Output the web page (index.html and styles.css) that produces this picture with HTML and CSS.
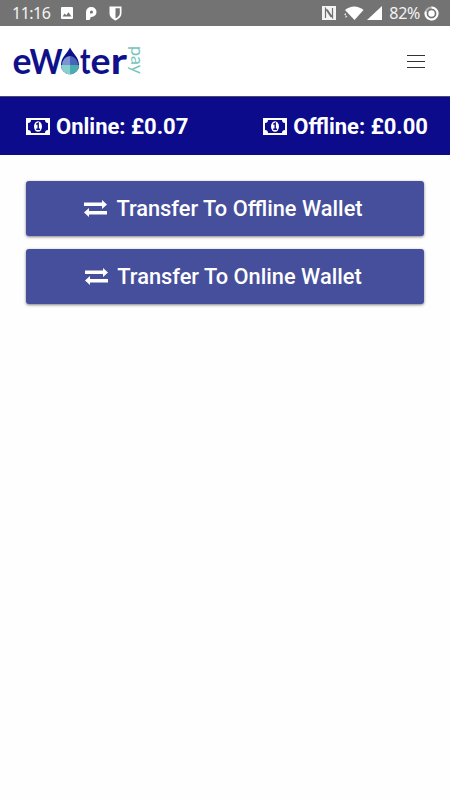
FILE: index.html
```
<!DOCTYPE html>
<html lang="en">
<head>
    <meta charset="UTF-8">
    <meta name="viewport" content="width=device-width, initial-scale=1.0">
    <title>eWater pay</title>
    <link rel="stylesheet" href="styles.css">
</head>
<body>
    <div class="status-bar">
        <div class="status-left">
            <span class="clock">11:16</span>
            <svg class="image-icon" width="12" height="12" viewBox="0 0 12 12">
                <path fill="#fff" fill-rule="evenodd" d="M1 0h10a1 1 0 0 1 1 1v10a1 1 0 0 1-1 1H1a1 1 0 0 1-1-1V1a1 1 0 0 1 1-1zM1.5 9.5h9L7.5 5.3 5.2 8.2 3.7 6.5z"/>
            </svg>
            <svg class="p-icon" width="11" height="13" viewBox="0 0 11 13">
                <path fill="#fff" fill-rule="evenodd" d="M0 5a5 5 0 0 1 5-5h.5a5 5 0 0 1 0 10H4.500v1a2 2 0 0 1-2 2H0zM4 6.500h1.500A1.500 1.500 0 1 0 4 5z"/>
            </svg>
            <svg class="shield-icon" width="13" height="15" viewBox="0 0 13 15">
                <path fill="#fff" fill-rule="evenodd" d="M0.5 0.5h12v6.7c0 3.5-3 5.8-6 7.3-3-1.5-6-3.8-6-7.3zM6.5 2.3v10.2c2.4-1.3 4.3-2.9 4.3-5.3V2.3z"/>
            </svg>
        </div>
        <div class="status-right">
            <svg width="14" height="14" viewBox="0 0 14 14">
                <path fill="#f4f4f4" d="M0 0h14v14H0z"/>
                <path fill="none" stroke="#707070" stroke-width="1.2" d="M3.5 12V2.5L9 11M10.5 2v9.5L5.2 3.5"/>
            </svg>
            <svg class="wifi-icon" width="20" height="14" viewBox="0 0 20 14">
                <path fill="#fff" d="M1 4C6.5-.8 14-.8 19.5 4L10.5 14z"/>
                <path fill="#ddd" d="M0 8.5l2-1.500v3zM3.500 10.500l-2-1.500v3z"/>
            </svg>
            <svg class="signal-icon" width="15" height="14" viewBox="0 0 15 14">
                <path fill="#fff" d="M15 0v14H0z"/>
            </svg>
            <span class="battery">82%</span>
            <svg class="battery-icon" width="15" height="15" viewBox="0 0 15 15">
                <circle cx="7.5" cy="7.5" r="6" fill="none" stroke="#b5b5b5" stroke-width="2"/>
                <path fill="none" stroke="#fff" stroke-width="2" d="M7.5 1.5a6 6 0 1 1-5.6 4"/>
                <circle cx="7.5" cy="7.5" r="3.2" fill="#fff"/>
            </svg>
        </div>
    </div>

    <header class="header">
        <svg class="logo" width="136" height="54" viewBox="0 0 136 54">
            <text class="logo-text" x="0.5" y="40" font-size="36" textLength="19" lengthAdjust="spacingAndGlyphs">e</text>
            <text class="logo-text" x="17.5" y="40" font-size="34" textLength="33" lengthAdjust="spacingAndGlyphs">W</text>
            <path fill="#10108a" d="M58 13.500c2 5 9 9.500 9 17.500a9 9.300 0 0 1-18 0C49 23 56 18.500 58 13.500z"/>
            <path fill="#7c93d4" d="M58 22v9h-8a8 9 0 0 1 8-9z"/>
            <path fill="#4667b8" d="M58 22v9h8a8 9 0 0 0-8-9z"/>
            <path fill="#88d0cc" d="M58 31v9.3a9 9.3 0 0 1-9-9.300z"/>
            <path fill="#4aaeb0" d="M58 31v9.3a9 9.3 0 0 0 9-9.300z"/>
            <text class="logo-text" x="68" y="40" font-size="36" textLength="10.5" lengthAdjust="spacingAndGlyphs">t</text>
            <text class="logo-text" x="78.5" y="40" font-size="36" textLength="20" lengthAdjust="spacingAndGlyphs">e</text>
            <text class="logo-text" x="98.5" y="40" font-size="36" textLength="16.5" lengthAdjust="spacingAndGlyphs">r</text>
            <text class="logo-pay" transform="translate(118.5 12) rotate(90)" font-size="17" textLength="28" lengthAdjust="spacingAndGlyphs">pay</text>
        </svg>
        <div class="menu-button">
            <span></span>
            <span></span>
            <span></span>
        </div>
    </header>

    <div class="balance-bar">
        <div class="balance">
            <svg class="money-icon" width="24" height="17" viewBox="0 0 24 17">
                <path fill="#fff" fill-rule="evenodd" d="M0 0h24v17H0zM5 2a3 3 0 0 1-3 3v7a3 3 0 0 1 3 3h14a3 3 0 0 1 3-3V5a3 3 0 0 1-3-3z"/>
                <ellipse cx="12" cy="8.5" rx="4" ry="5.2" fill="#fff"/>
                <path fill="none" stroke="#0b0b8b" stroke-width="1.4" d="M10.3 6.3l1.900-1.100v6M10.2 11.3h3.8"/>
            </svg>
            <span class="online">Online: £0.07</span>
        </div>
        <div class="balance">
            <svg class="money-icon" width="24" height="17" viewBox="0 0 24 17">
                <path fill="#fff" fill-rule="evenodd" d="M0 0h24v17H0zM5 2a3 3 0 0 1-3 3v7a3 3 0 0 1 3 3h14a3 3 0 0 1 3-3V5a3 3 0 0 1-3-3z"/>
                <ellipse cx="12" cy="8.5" rx="4" ry="5.2" fill="#fff"/>
                <path fill="none" stroke="#0b0b8b" stroke-width="1.4" d="M10.3 6.3l1.900-1.100v6M10.2 11.3h3.8"/>
            </svg>
            <span class="offline">Offline: £0.00</span>
        </div>
    </div>

    <div class="container">
        <button class="transfer-button">
            <svg width="23" height="17" viewBox="0 0 23 17">
                <path fill="#fff" d="M0 2.5h18V0l5 4.500L18 9V6H0zM23 11H5V8L0 12.500 5 17v-2.500h18z"/>
            </svg>
            <span>Transfer To Offline Wallet</span>
        </button>
        <button class="transfer-button">
            <svg width="23" height="17" viewBox="0 0 23 17">
                <path fill="#fff" d="M0 2.5h18V0l5 4.500L18 9V6H0zM23 11H5V8L0 12.500 5 17v-2.500h18z"/>
            </svg>
            <span>Transfer To Online Wallet</span>
        </button>
    </div>
</body>
</html>
```
FILE: styles.css
```
body {
    margin: 0;
    min-height: 100vh;
    background-color: #fefefe;
    font-family: Roboto, "Liberation Sans", sans-serif;
}

svg {
    display: block;
    flex-shrink: 0;
}

.status-bar {
    display: flex;
    justify-content: space-between;
    align-items: center;
    box-sizing: border-box;
    height: 26px;
    padding: 0 11px 0 12px;
    background-color: #737373;
    color: #f4f4f4;
    font-family: "Noto Sans", sans-serif;
    font-size: 16px;
    line-height: 26px;
}

.status-left,
.status-right {
    display: flex;
    align-items: center;
}

.clock {
    width: 49px;
    letter-spacing: -0.5px;
}

.p-icon {
    margin-left: 13px;
}

.shield-icon {
    margin-left: 12px;
}

.wifi-icon {
    margin-left: 8px;
}

.signal-icon {
    margin-left: 3px;
}

.battery {
    margin-left: 7px;
    letter-spacing: -0.3px;
}

.battery-icon {
    margin-left: 4px;
}

.header {
    display: flex;
    justify-content: space-between;
    align-items: center;
    box-sizing: border-box;
    height: 70px;
    padding: 0 25px 0 12px;
    background-color: #fff;
}

.logo-text {
    font-family: Lato, sans-serif;
    font-weight: 700;
    fill: #10108a;
}

.logo-pay {
    font-family: Lato, sans-serif;
    fill: #74c4ba;
}

.menu-button {
    display: flex;
    flex-direction: column;
    gap: 5px;
    width: 18px;
}

.menu-button span {
    height: 1px;
    background-color: #333;
}

.balance-bar {
    display: flex;
    justify-content: space-between;
    align-items: center;
    box-sizing: border-box;
    height: 59px;
    padding: 0 22px 0 26px;
    border-top: 1px solid #4a4a78;
    background-color: #0b0b8b;
    color: #fff;
    font-size: 22px;
    font-weight: 700;
}

.balance {
    display: flex;
    align-items: center;
    gap: 6px;
}

.container {
    display: flex;
    flex-direction: column;
    gap: 13px;
    padding: 26px 26px 0;
}

.transfer-button {
    display: flex;
    justify-content: center;
    align-items: center;
    gap: 9px;
    height: 55px;
    padding: 0 3px 0 0;
    border: none;
    border-radius: 3px;
    background-color: #464f9c;
    box-shadow: 0 1px 3px rgba(0, 0, 0, 0.5);
    color: #fff;
    font-family: inherit;
    font-size: 21.8px;
    font-weight: 500;
}
```
